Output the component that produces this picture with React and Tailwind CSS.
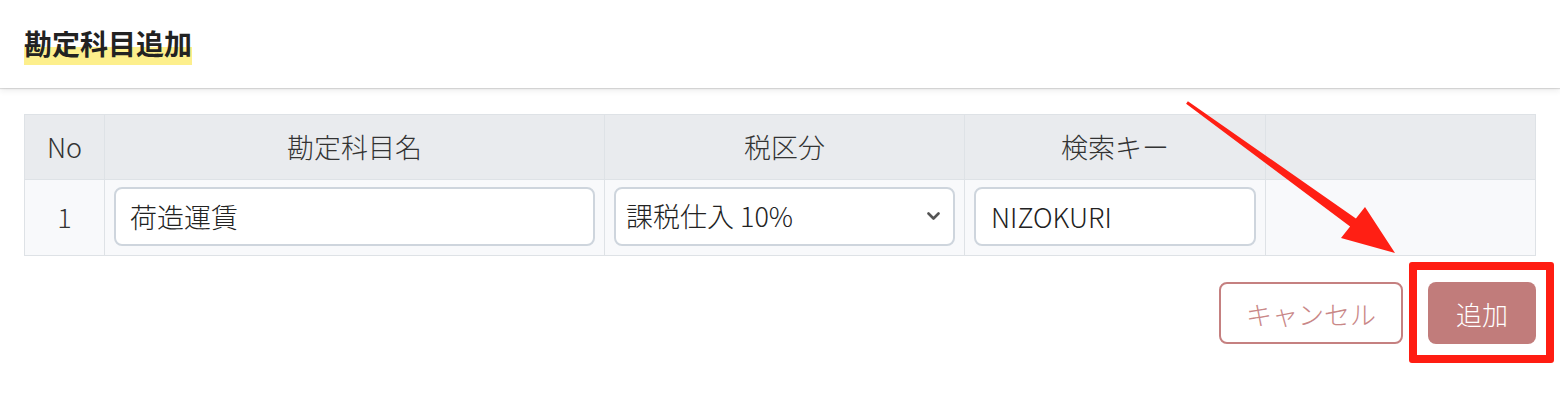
import { useState } from 'react';

const font = { fontFamily: '"Noto Sans CJK JP", "Noto Sans", sans-serif' };

export default function App() {
  const [name, setName] = useState('荷造運賃');
  const [tax, setTax] = useState('課税仕入 10%');
  const [key, setKey] = useState('NIZOKURI');

  const th = "border border-[#dee2e6] font-light text-[27px] text-[#333] text-center";
  const td = "border border-[#dee2e6] px-[9px] pt-[7px] pb-[9px]";
  const inputClass = "w-full h-[59px] bg-white border-2 border-[#ced5dd] rounded-[8px] text-[27px] font-light text-[#222] outline-none";

  return (
    <div className="relative w-[1560px] h-[410px] bg-white overflow-hidden" style={font}>
      {/* Header */}
      <div className="h-[88px] px-6 pt-[29px] bg-white shadow-[0_1px_1px_rgba(0,0,0,0.12),0_3px_6px_rgba(0,0,0,0.07)]">
        <span className="inline-block leading-none pb-2 text-[28px] font-bold text-[#222] bg-[linear-gradient(transparent_51%,#fdef8c_51%)]">
          勘定科目追加
        </span>
      </div>

      {/* Table */}
      <div className="px-6 pt-[26px]">
        <table className="w-[1511px] table-fixed border-collapse">
          <colgroup>
            <col className="w-[80px]" />
            <col className="w-[500px]" />
            <col className="w-[360px]" />
            <col className="w-[301px]" />
            <col className="w-[270px]" />
          </colgroup>
          <thead>
            <tr className="h-[65px] bg-[#e9ebee]">
              <th className={th}>No</th>
              <th className={th}>勘定科目名</th>
              <th className={th}>税区分</th>
              <th className={th}>検索キー</th>
              <th className={th}></th>
            </tr>
          </thead>
          <tbody>
            <tr className="h-[76px] bg-[#f8f9fb]">
              <td className="border border-[#dee2e6] text-center text-[27px] font-light text-[#333]">1</td>
              <td className={td}>
                <input className={`${inputClass} pl-[14px]`} value={name} onChange={e => setName(e.target.value)} />
              </td>
              <td className={td}>
                <div className="relative">
                  <select
                    className={`${inputClass} appearance-none pl-[10px]`}
                    value={tax}
                    onChange={e => setTax(e.target.value)}
                  >
                    <option>課税仕入 10%</option>
                    <option>課税仕入 8%</option>
                    <option>非課税</option>
                  </select>
                  <svg className="pointer-events-none absolute right-[15px] top-[25px] w-[13px] h-[9px]" viewBox="0 0 13 9" fill="none">
                    <path d="M1.5 1.5L6.5 6.5L11.5 1.5" stroke="#555" strokeWidth="2.6" strokeLinecap="round" strokeLinejoin="round" />
                  </svg>
                </div>
              </td>
              <td className={td}>
                <input className={`${inputClass} pl-[15px]`} value={key} onChange={e => setKey(e.target.value)} />
              </td>
              <td className="border border-[#dee2e6]"></td>
            </tr>
          </tbody>
        </table>
      </div>

      {/* Buttons */}
      <div className="flex justify-end gap-[25px] px-6 pt-[26px]">
        <button className="h-[62px] w-[184px] border-2 border-[#c58080] rounded-[8px] bg-white text-[26px] font-light text-[#c98787]">
          キャンセル
        </button>
        <div className="relative">
          <button className="h-[62px] w-[108px] rounded-[8px] bg-[#c17c7b] text-[26px] font-light text-white">
            追加
          </button>
          {/* annotation box */}
          <div className="pointer-events-none absolute -left-[19px] -right-[18px] -top-[20px] -bottom-[19px] border-[8px] border-[#ff1d12] rounded-[3px]" />
        </div>
      </div>

      {/* annotation arrow */}
      <svg className="pointer-events-none absolute left-0 top-0" width="1560" height="410" viewBox="0 0 1560 410">
        <polygon
          fill="#ff1f14"
          points="1187.9,101.3 1355.9,218.4 1365,207 1395,253 1341,238 1350.1,226.6 1186.1,103.7"
        />
      </svg>
    </div>
  );
}
